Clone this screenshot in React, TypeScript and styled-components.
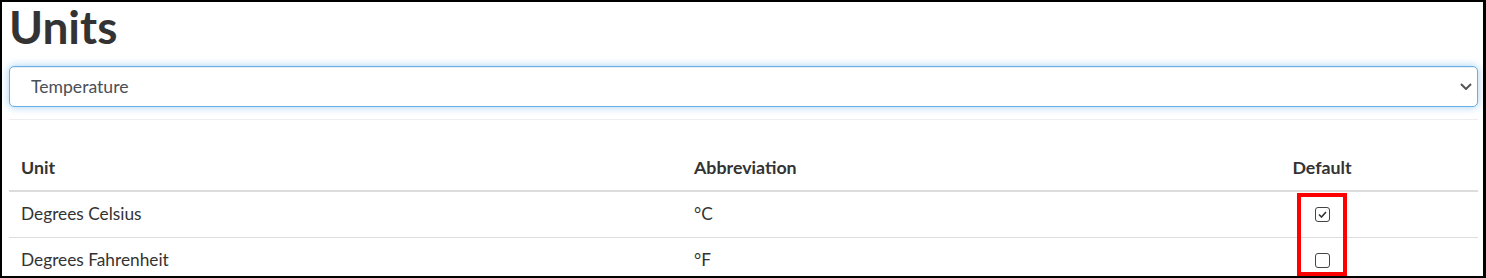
import styled, { createGlobalStyle } from "styled-components";

const GlobalStyle = createGlobalStyle`
    html, body {
        margin: 0;
        padding: 0;
        background: white;
    }
    body {
        font-family: Lato, "Open Sans", sans-serif;
        color: #333;
    }
`;

const Frame = styled.div`
    position: relative;
    box-sizing: border-box;
    width: 1486px;
    height: 278px;
    overflow: hidden;
    border: solid black;
    border-width: 2px 3px 2px 2px;
    padding: 0 5px 0 7px;
    background: white;
`;

const Title = styled.h1`
    margin: 0 0 14px;
    font-size: 46px;
    line-height: 50px;
    font-weight: 700;
    color: #333;
`;

const SelectWrap = styled.div`
    position: relative;
    height: 41px;
`;

const Select = styled.select`
    appearance: none;
    box-sizing: border-box;
    width: 100%;
    height: 41px;
    padding: 0 40px 0 21px;
    font-family: Lato, sans-serif;
    font-size: 17.6px;
    color: #495057;
    background: white;
    border: 1px solid #66afe9;
    border-radius: 5px;
    outline: none;
    box-shadow: inset 0 1px 1px rgba(0, 0, 0, 0.075), 0 0 8px rgba(102, 175, 233, 0.6);
`;

const Chevron = styled.svg`
    position: absolute;
    right: 6px;
    top: 17px;
    pointer-events: none;
`;

const Rule = styled.hr`
    margin: 12px 0 25px;
    border: 0;
    border-top: 1px solid #eee;
`;

const Row = styled.div<{ $head?: boolean }>`
    display: grid;
    grid-template-columns: 673px 599px 82px 1fr;
    border-bottom: ${(p) => (p.$head ? "2px solid #dcdcdc" : "1px solid #dedede")};
    font-size: ${(p) => (p.$head ? "17.8px" : "17.3px")};
    line-height: 24px;
    font-weight: ${(p) => (p.$head ? 700 : 400)};
    color: #333;
`;

const Cell = styled.div<{ $center?: boolean }>`
    padding: 10px 12px 11px;
    white-space: nowrap;
    display: flex;
    align-items: center;
    justify-content: ${(p) => (p.$center ? "center" : "flex-start")};
`;

const Box = styled.span`
    box-sizing: border-box;
    width: 15px;
    height: 15px;
    border: 1.5px solid #444;
    border-radius: 3px;
    display: flex;
    align-items: center;
    justify-content: center;
    background: white;
`;

const Highlight = styled.div`
    position: absolute;
    left: 1295px;
    top: 191px;
    width: 50px;
    height: 83px;
    box-sizing: border-box;
    border: 4px solid #f00;
    pointer-events: none;
`;

function Checkbox({ checked }: { checked: boolean }) {
    return (
        <Box>
            {checked && (
                <svg width="9" height="7" viewBox="0 0 9 7">
                    <polyline points="1,3.5 3.5,6 8,1" fill="none" stroke="#333" strokeWidth="1.6" />
                </svg>
            )}
        </Box>
    );
}

const units = [
    { name: "Degrees Celsius", abbr: "°C", isDefault: true },
    { name: "Degrees Fahrenheit", abbr: "°F", isDefault: false },
];

export default function App() {
    return (
        <>
            <GlobalStyle />
            <Frame>
                <Title>Units</Title>
                <SelectWrap>
                    <Select defaultValue="temperature">
                        <option value="temperature">Temperature</option>
                    </Select>
                    <Chevron width="12" height="7" viewBox="0 0 12 7">
                        <polyline points="1,1 6,6 11,1" fill="none" stroke="#555" strokeWidth="2" />
                    </Chevron>
                </SelectWrap>
                <Rule />
                <Row $head>
                    <Cell>Unit</Cell>
                    <Cell>Abbreviation</Cell>
                    <Cell $center>Default</Cell>
                    <Cell />
                </Row>
                {units.map((u) => (
                    <Row key={u.name}>
                        <Cell>{u.name}</Cell>
                        <Cell>{u.abbr}</Cell>
                        <Cell $center>
                            <Checkbox checked={u.isDefault} />
                        </Cell>
                        <Cell />
                    </Row>
                ))}
                <Highlight />
            </Frame>
        </>
    );
}
